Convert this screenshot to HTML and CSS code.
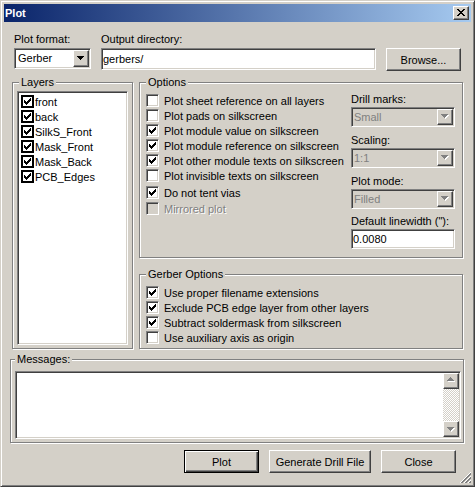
FILE: index.html
```html
<!DOCTYPE html>
<html>
<head>
<meta charset="utf-8">
<title>Plot</title>
<link rel="stylesheet" href="styles.css">
</head>
<body>
<svg class="defs" aria-hidden="true">
  <symbol id="chk" viewBox="0 0 7 7"><path d="M6 0h1v1H6zM5 1h2v1H5zM0 2h1v1H0zM4 2h3v1H4zM0 3h2v1H0zM3 3h3v1H3zM0 4h5v1H0zM1 5h3v1H1zM2 6h1v1H2z"/></symbol>
  <symbol id="down" viewBox="0 0 7 4"><path d="M0 0h7v1H0zM1 1h5v1H1zM2 2h3v1H2zM3 3h1v1H3z"/></symbol>
  <symbol id="up" viewBox="0 0 7 4"><path d="M3 0h1v1H3zM2 1h3v1H2zM1 2h5v1H1zM0 3h7v1H0z"/></symbol>
  <symbol id="x" viewBox="0 0 8 7"><path d="M0 0h2v1H0zM6 0h2v1H6zM1 1h2v1H1zM5 1h2v1H5zM2 2h4v1H2zM3 3h2v1H3zM2 4h4v1H2zM1 5h2v1H1zM5 5h2v1H5zM0 6h2v1H0zM6 6h2v1H6z"/></symbol>
</svg>
<div class="window">
  <div class="titlebar">
    <span class="title">Plot</span>
    <span class="capbtn raised"><svg width="8" height="7"><use href="#x" width="8" height="7"/></svg></span>
  </div>
  <div class="client">
    <div class="toprow">
      <div class="lbl">Plot format:</div>
      <div class="lbl">Output directory:</div>
      <div></div>
      <div class="combo sunken"><span class="val">Gerber</span><span class="dd raised"><svg width="7" height="4"><use href="#down" width="7" height="4"/></svg></span></div>
      <div class="edit sunken">gerbers/</div>
      <div class="btn raised">Browse...</div>
    </div>

    <div class="middle">
      <div class="group layers">
        <span class="gtitle">Layers</span>
        <div class="list sunken">
          <div class="li"><span class="lcb"><svg width="7" height="7"><use href="#chk" width="7" height="7"/></svg></span>front</div>
          <div class="li"><span class="lcb"><svg width="7" height="7"><use href="#chk" width="7" height="7"/></svg></span>back</div>
          <div class="li"><span class="lcb"><svg width="7" height="7"><use href="#chk" width="7" height="7"/></svg></span>SilkS_Front</div>
          <div class="li"><span class="lcb"><svg width="7" height="7"><use href="#chk" width="7" height="7"/></svg></span>Mask_Front</div>
          <div class="li"><span class="lcb"><svg width="7" height="7"><use href="#chk" width="7" height="7"/></svg></span>Mask_Back</div>
          <div class="li"><span class="lcb"><svg width="7" height="7"><use href="#chk" width="7" height="7"/></svg></span>PCB_Edges</div>
        </div>
      </div>

      <div class="rcol">
        <div class="group options">
          <span class="gtitle">Options</span>
          <div class="checks">
            <div class="row"><span class="cb"></span>Plot sheet reference on all layers</div>
            <div class="row"><span class="cb"></span>Plot pads on silkscreen</div>
            <div class="row"><span class="cb"><svg width="7" height="7"><use href="#chk" width="7" height="7"/></svg></span>Plot module value on silkscreen</div>
            <div class="row"><span class="cb"><svg width="7" height="7"><use href="#chk" width="7" height="7"/></svg></span>Plot module reference on silkscreen</div>
            <div class="row"><span class="cb"><svg width="7" height="7"><use href="#chk" width="7" height="7"/></svg></span>Plot other module texts on silkscreen</div>
            <div class="row"><span class="cb"></span>Plot invisible texts on silkscreen</div>
            <div class="row gap2"><span class="cb"><svg width="7" height="7"><use href="#chk" width="7" height="7"/></svg></span>Do not tent vias</div>
            <div class="row gap1"><span class="cb dis"></span><span class="distext">Mirrored plot</span></div>
          </div>
          <div class="side">
            <div class="lbl">Drill marks:</div>
            <div class="combo off sunken"><span class="val">Small</span><span class="dd raised"><svg width="8" height="5"><use href="#down" x="1" y="1" width="7" height="4" fill="#fff"/><use href="#down" width="7" height="4" fill="#808080"/></svg></span></div>
            <div class="lbl">Scaling:</div>
            <div class="combo off sunken"><span class="val">1:1</span><span class="dd raised"><svg width="8" height="5"><use href="#down" x="1" y="1" width="7" height="4" fill="#fff"/><use href="#down" width="7" height="4" fill="#808080"/></svg></span></div>
            <div class="lbl">Plot mode:</div>
            <div class="combo off last sunken"><span class="val">Filled</span><span class="dd raised"><svg width="8" height="5"><use href="#down" x="1" y="1" width="7" height="4" fill="#fff"/><use href="#down" width="7" height="4" fill="#808080"/></svg></span></div>
            <div class="lbl">Default linewidth ("):</div>
            <div class="lw sunken">0.0080</div>
          </div>
        </div>

        <div class="group gerber">
          <span class="gtitle">Gerber Options</span>
          <div class="checks">
            <div class="row"><span class="cb"><svg width="7" height="7"><use href="#chk" width="7" height="7"/></svg></span>Use proper filename extensions</div>
            <div class="row"><span class="cb"><svg width="7" height="7"><use href="#chk" width="7" height="7"/></svg></span>Exclude PCB edge layer from other layers</div>
            <div class="row"><span class="cb"><svg width="7" height="7"><use href="#chk" width="7" height="7"/></svg></span>Subtract soldermask from silkscreen</div>
            <div class="row"><span class="cb"></span>Use auxiliary axis as origin</div>
          </div>
        </div>
      </div>
    </div>

    <div class="group messages">
      <span class="gtitle msg">Messages:</span>
      <div class="msgbox sunken">
        <div class="vscroll">
          <span class="sbtn raised"><svg width="8" height="5"><use href="#up" x="1" y="1" width="7" height="4" fill="#fff"/><use href="#up" width="7" height="4" fill="#808080"/></svg></span>
          <span class="track"></span>
          <span class="sbtn dn raised"><svg width="8" height="5"><use href="#down" x="1" y="1" width="7" height="4" fill="#fff"/><use href="#down" width="7" height="4" fill="#808080"/></svg></span>
        </div>
      </div>
    </div>

    <div class="buttons">
      <div class="btn raised default">Plot</div>
      <div class="btn raised wide">Generate Drill File</div>
      <div class="btn raised">Close</div>
    </div>

    <svg class="grip" width="12" height="12" viewBox="0 0 12 12">
      <path stroke="#fff" stroke-width="1" d="M1 12L12 1M5 12L12 5M9 12L12 9"/>
      <path stroke="#808080" stroke-width="1" d="M2 12L12 2M3 12L12 3M6 12L12 6M7 12L12 7M10 12L12 10M11 12L12 11"/>
    </svg>
  </div>
</div>
</body>
</html>
```

FILE: styles.css
```css
* { box-sizing: border-box; }
html, body { margin: 0; padding: 0; }
body {
  width: 475px;
  height: 487px;
  overflow: hidden;
  font-family: "Liberation Sans", Arial, sans-serif;
  font-size: 11px;
  color: #000;
  background: #d4d0c8;
}
.defs { position: absolute; width: 0; height: 0; overflow: hidden; }

.window {
  width: 475px;
  height: 487px;
  display: flex;
  flex-direction: column;
  background: #d4d0c8;
  border: 1px solid;
  border-color: #d4d0c8 #404040 #404040 #d4d0c8;
  box-shadow: inset 1px 1px 0 #fff, inset -1px -1px 0 #808080;
  padding: 3px;
}

.raised {
  background: #d4d0c8;
  border: 1px solid;
  border-color: #fff #404040 #404040 #fff;
  box-shadow: inset -1px -1px 0 #808080;
}
.sunken {
  border: 1px solid;
  border-color: #808080 #fff #fff #808080;
  box-shadow: inset 1px 1px 0 #404040, inset -1px -1px 0 #d4d0c8;
  padding: 1px;
}

.titlebar {
  flex: none;
  height: 18px;
  display: flex;
  align-items: flex-start;
  justify-content: space-between;
  padding: 0 2px 0 1px;
  background: linear-gradient(to right, #0a246a, #a6caf0);
}
.title { color: #fff; font-weight: bold; line-height: 18px; }
.capbtn { display: block; width: 16px; height: 14px; margin-top: 2px; }
.capbtn svg { display: block; margin: 2px 0 0 3px; }

.client { flex: 1; position: relative; padding-top: 11px; }

.toprow {
  display: grid;
  grid-template-columns: 77px 275px 75px;
  grid-template-rows: 13px 23px;
  column-gap: 10px;
  row-gap: 2px;
  margin-left: 10px;
  align-items: start;
}
.lbl { line-height: 13px; white-space: nowrap; }

.combo { display: flex; height: 21px; background: #fff; }
.combo .val { flex: 1; line-height: 17px; padding-left: 2px; white-space: nowrap; }
.dd { display: block; width: 16px; height: 17px; flex: none; }
.dd svg { display: block; margin: 5px 0 0 3px; }
.edit { height: 22px; background: #fff; line-height: 18px; padding-left: 1px; }
.btn { display: flex; align-items: center; justify-content: center; height: 23px; white-space: nowrap; }

.middle { display: flex; align-items: flex-start; gap: 6px; margin: 11px 0 0 8px; }

.group {
  position: relative;
  border: 1px solid #808080;
  box-shadow: 1px 1px 0 #fff, inset 1px 1px 0 #fff;
}
.gtitle {
  position: absolute;
  top: -7px;
  left: 6px;
  padding: 0 2px;
  line-height: 13px;
  background: #d4d0c8;
  white-space: nowrap;
}
.gtitle.msg { left: 4px; }

.layers { width: 121px; height: 267px; padding: 8px 0 0 4px; }
.list { width: 111px; height: 254px; background: #fff; padding-top: 2px; }
.li { display: flex; align-items: center; height: 15px; padding-left: 2px; white-space: nowrap; }
.lcb { display: block; width: 13px; height: 13px; flex: none; border: 2px solid #000; background: #fff; margin-right: 1px; }
.lcb svg { display: block; margin: 1px 0 0 1px; }

.rcol { display: flex; flex-direction: column; gap: 16px; }
.options { width: 324px; height: 176px; display: flex; padding: 10px 7px 0 6px; }
.gerber { width: 324px; height: 75px; padding: 10px 0 0 6px; }
.checks { display: flex; flex-direction: column; }
.row { display: flex; align-items: center; height: 15px; white-space: nowrap; }
.row.gap2 { margin-top: 2px; }
.row.gap1 { margin-top: 1px; }
.cb {
  display: block;
  width: 13px;
  height: 13px;
  flex: none;
  margin-right: 5px;
  background: #fff;
  border: 1px solid;
  border-color: #808080 #fff #fff #808080;
  box-shadow: inset 1px 1px 0 #404040, inset -1px -1px 0 #d4d0c8;
}
.cb svg { display: block; margin: 2px 0 0 2px; }
.cb.dis { background: #d4d0c8; }
.distext { color: #808080; text-shadow: 1px 1px 0 #fff; }

.side { margin-left: auto; width: 104px; display: flex; flex-direction: column; }
.side .lbl { margin-bottom: 1px; }
.combo.off { height: 20px; background: #d4d0c8; color: #808080; margin-bottom: 7px; }
.combo.off.last { margin-bottom: 6px; }
.combo.off .val { line-height: 16px; padding-left: 1px; }
.combo.off .dd { height: 16px; }
.combo.off .dd svg { margin: 4px 0 0 3px; }
.lw { height: 20px; background: #fff; line-height: 16px; padding-left: 1px; }

.messages { width: 454px; height: 84px; margin: 10px 0 0 6px; padding: 11px 0 0 4px; }
.msgbox { width: 446px; height: 68px; background: #fff; display: flex; justify-content: flex-end; }
.vscroll { width: 16px; display: flex; flex-direction: column; }
.sbtn { display: block; width: 16px; height: 16px; flex: none; }
.sbtn svg { display: block; margin: 3px 0 0 3px; }
.sbtn.dn svg { margin-top: 5px; }
.track { flex: 1; background: repeating-conic-gradient(#d4d0c8 0 25%, #fff 0 50%) 0 0 / 2px 2px; }

.buttons { display: flex; justify-content: flex-end; gap: 10px; margin-top: 7px; padding-right: 15px; }
.buttons .btn { width: 75px; }
.buttons .btn.wide { width: 102px; }
.btn.default {
  border: 1px solid #000;
  box-shadow: inset 1px 1px 0 #fff, inset -1px -1px 0 #404040, inset -2px -2px 0 #808080;
}

.grip { position: absolute; right: 0; bottom: 0; display: block; }
```
